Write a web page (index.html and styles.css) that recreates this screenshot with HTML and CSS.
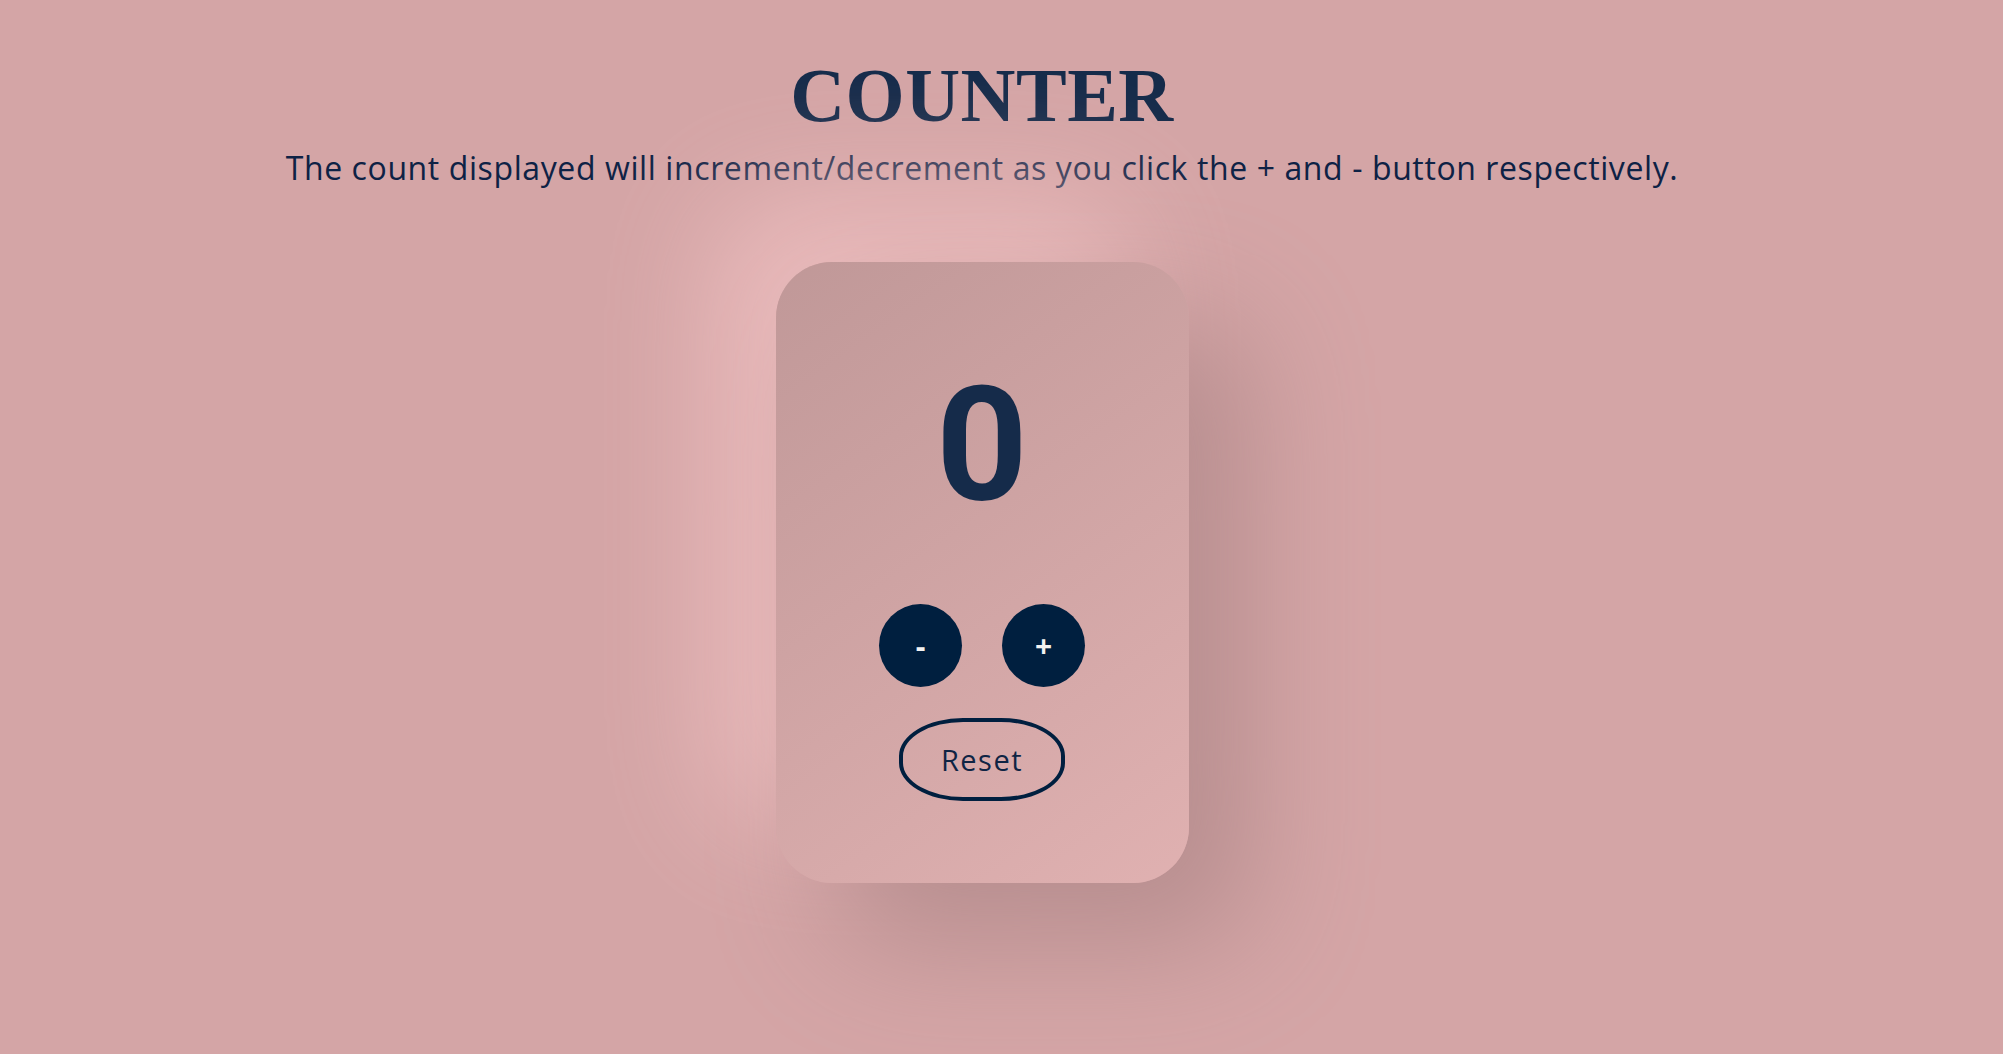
FILE: index.html
```html
<!DOCTYPE html>
<html lang="en">
<head>
<meta charset="utf-8">
<title>Counter</title>
<link rel="stylesheet" href="styles.css">
</head>
<body>
  <main class="page">
    <h1 class="title">COUNTER</h1>
    <p class="subtitle">The count displayed will increment/decrement as you click the + and - button respectively.</p>
    <section class="card">
      <div class="count">0</div>
      <div class="controls">
        <button class="round-btn" type="button">-</button>
        <button class="round-btn" type="button">+</button>
      </div>
      <button class="reset-btn" type="button">Reset</button>
    </section>
  </main>
</body>
</html>
```

FILE: styles.css
```css
* { box-sizing: border-box; }

html, body {
  margin: 0;
  padding: 0;
  height: 100%;
}

body {
  background: #d4a5a6;
  overflow: hidden;
}

.page {
  display: flex;
  flex-direction: column;
  align-items: center;
  padding-right: 39px;
  padding-top: 57px;
}

.title {
  margin: 0;
  font-family: "Liberation Serif", "Times New Roman", serif;
  font-weight: 700;
  font-size: 76px;
  line-height: 76px;
  color: #152b4a;
  letter-spacing: 0.5px;
}

.subtitle {
  margin: 19px 0 0;
  font-family: "Open Sans", "Noto Sans", sans-serif;
  font-size: 32px;
  line-height: 31px;
  letter-spacing: 0.6px;
  color: #0e2245;
  white-space: nowrap;
}

.card {
  position: relative;
  margin-top: 79px;
  width: 413px;
  height: 621px;
  border-radius: 56px;
  background: linear-gradient(145deg, #c09898, #e0b1b1);
  box-shadow: 60px 60px 120px #b78e8f, -60px -60px 120px #ecbdbe;
  display: flex;
  flex-direction: column;
  align-items: center;
  padding-top: 99px;
}

.count {
  font-family: Roboto, "Open Sans", sans-serif;
  font-weight: 700;
  font-size: 160px;
  line-height: 168px;
  color: #152b4a;
}

.controls {
  margin-top: 75px;
  display: flex;
  gap: 40px;
}

.round-btn {
  width: 83px;
  height: 83px;
  border: none;
  border-radius: 50%;
  background: #001f3f;
  color: #f2f2f2;
  font-family: "Open Sans", "Noto Sans", sans-serif;
  font-weight: 700;
  font-size: 30px;
  line-height: 1;
  padding: 0;
  display: flex;
  align-items: center;
  justify-content: center;
}

.reset-btn {
  margin-top: 31px;
  width: 166px;
  height: 83px;
  border: 4px solid #001f3f;
  border-radius: 64px / 38px;
  background: transparent;
  color: #0f2444;
  font-family: "Open Sans", "Noto Sans", sans-serif;
  font-size: 29px;
  letter-spacing: 1.5px;
  padding: 0;
}
```
